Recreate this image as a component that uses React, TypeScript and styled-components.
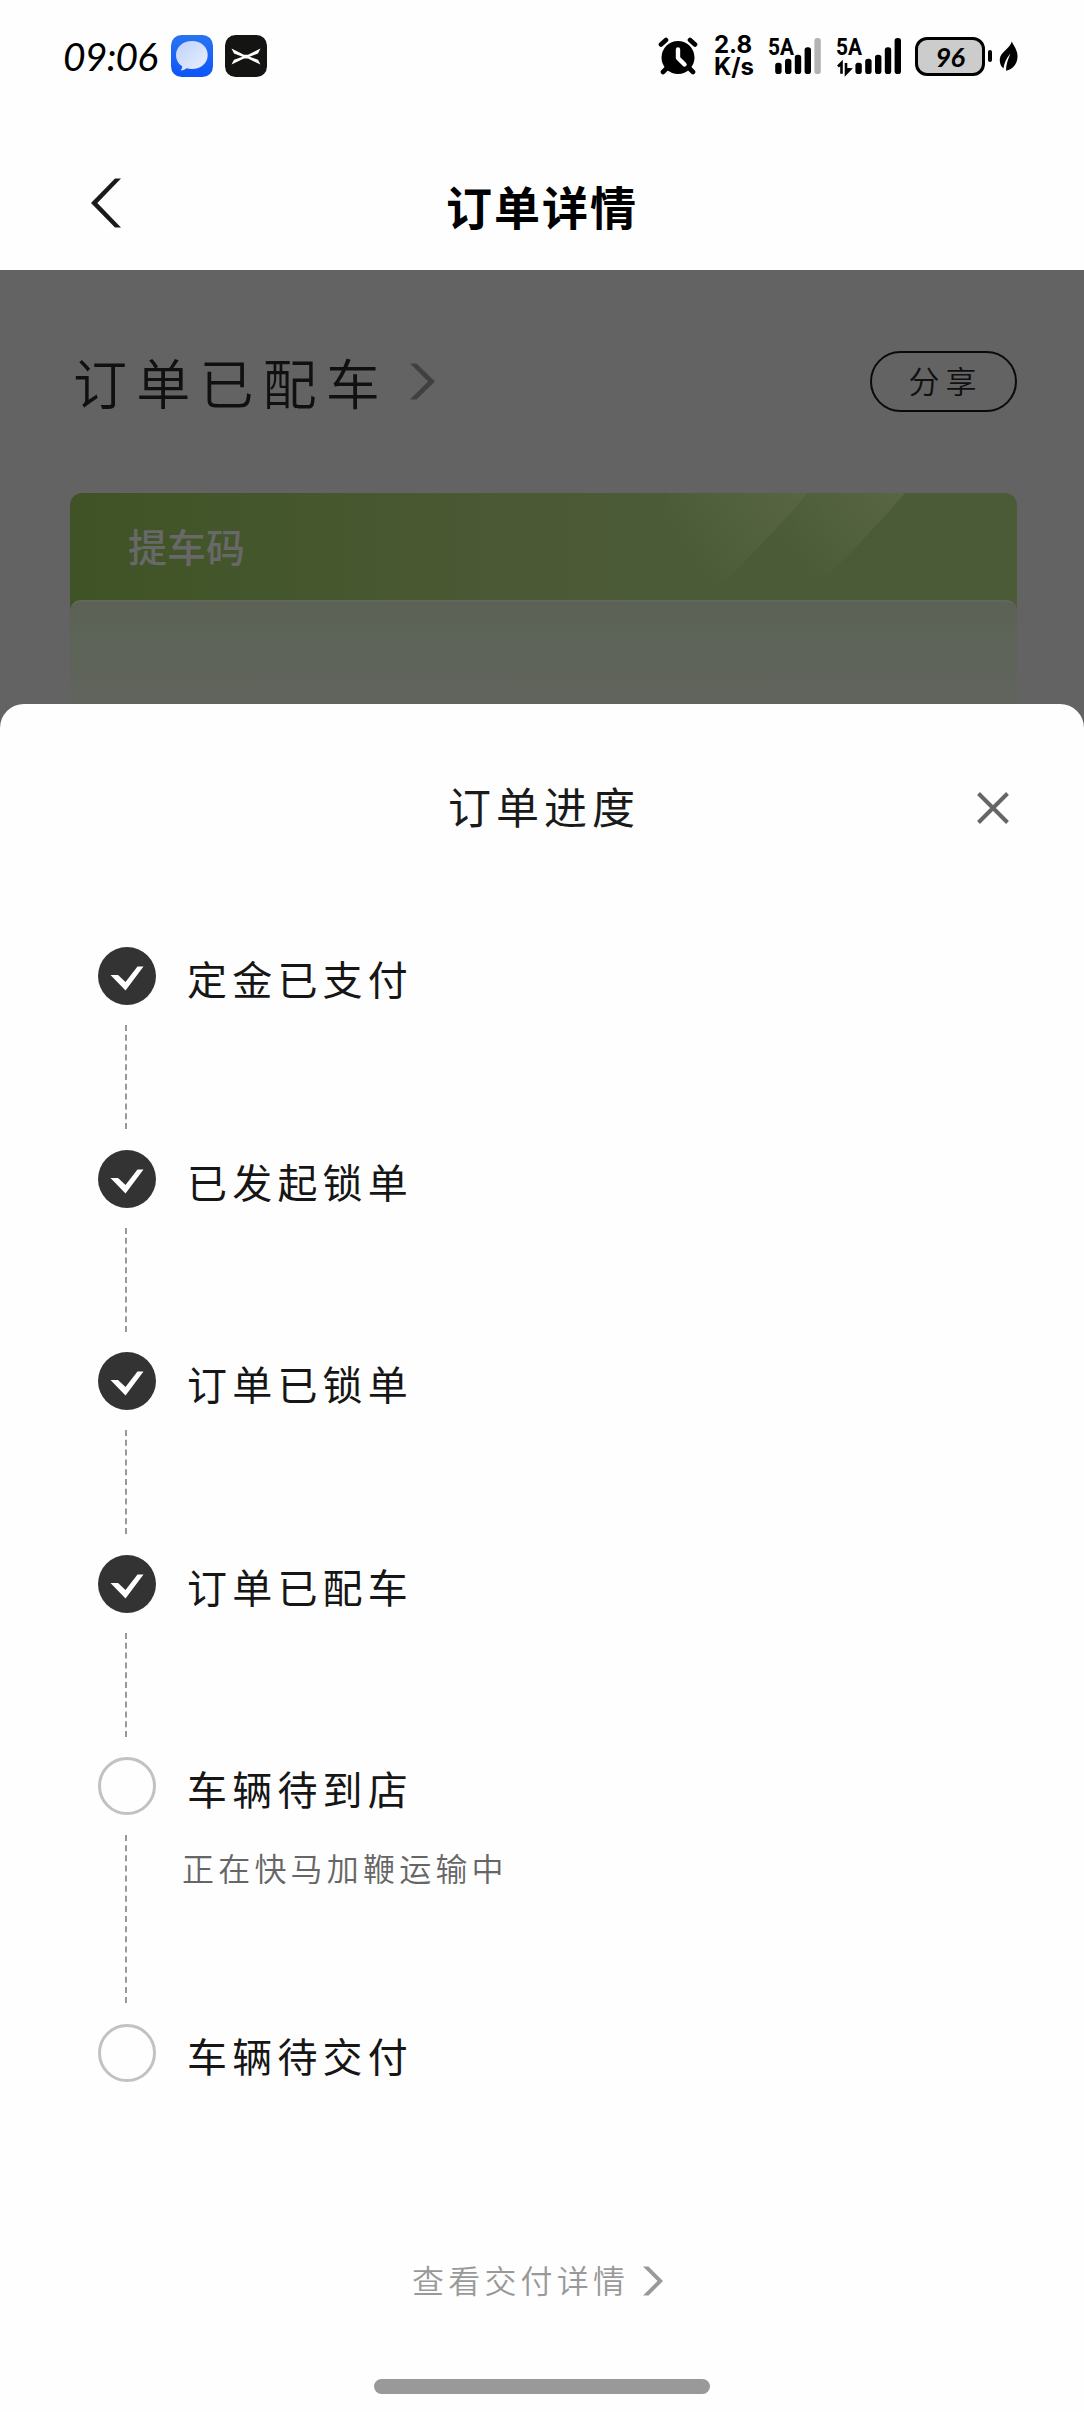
import React from "react";
import styled, { createGlobalStyle } from "styled-components";

const cjk = `"Noto Sans CJK SC", "Noto Sans", sans-serif`;
const digits = `Lato, "Open Sans", sans-serif`;

const GlobalStyle = createGlobalStyle`
  * { box-sizing: border-box; }
  body { margin: 0; background: #fefefe; font-family: ${cjk}; }
`;

const Screen = styled.div`
  width: 1084px;
  height: 2412px;
  display: flex;
  flex-direction: column;
  overflow: hidden;
  background: #fefefe;
`;

const StatusBar = styled.div`
  height: 112px;
  padding: 0 66px 0 63px;
  display: flex;
  align-items: center;
  justify-content: space-between;
`;

const StatusGroup = styled.div`
  display: flex;
  align-items: center;
  height: 44px;
`;

const Clock = styled.span`
  width: 108px;
  font: italic 400 39px/44px ${digits};
  letter-spacing: -0.8px;
  color: #000;
`;

const AppIcon = styled.svg`
  display: block;
  width: 42px;
  height: 42px;
  margin-right: 12px;
`;

const AlarmIcon = styled.svg`
  width: 40px;
  height: 40px;
  margin-right: 16px;
`;

const NetSpeed = styled.div`
  width: 54px;
  display: flex;
  flex-direction: column;
  font: 700 24px/22px Inter, sans-serif;
  color: #000;
`;

const Signal = styled.svg<{ $gap: number }>`
  height: 40px;
  margin-right: ${(p) => p.$gap}px;
  overflow: visible;
`;

const Battery = styled.div`
  width: 70px;
  height: 39px;
  border: 3px solid #000;
  border-radius: 12px;
  background: #ccc;
  display: flex;
  align-items: center;
  justify-content: center;
  font: italic 700 27px/33px ${digits};
  letter-spacing: -0.5px;
  color: #000;
`;

const BatteryNub = styled.div`
  width: 4px;
  height: 12px;
  margin: 0 7px 0 3px;
  border-radius: 2px;
  background: #000;
`;

const LeafIcon = styled.svg`
  width: 19px;
  height: 30px;
`;

const NavBar = styled.header`
  height: 158px;
  padding: 27px 91px 0;
  display: grid;
  grid-template-columns: 60px 1fr 60px;
  align-items: center;
`;

const BackIcon = styled.svg`
  width: 30px;
  height: 50px;
  margin-bottom: 3px;
`;

const NavTitle = styled.h1`
  margin: 0;
  text-align: center;
  font: 700 46px/60px ${cjk};
  letter-spacing: 2px;
  color: #000;
`;

const Dimmed = styled.section`
  height: 434px;
  padding: 81px 67px 0 70px;
  background: #636363;
`;

const OrderHeader = styled.div`
  display: flex;
  align-items: center;
  height: 61px;
  margin-bottom: 81px;
`;

const OrderStatus = styled.h2`
  margin: 0 21px 0 3px;
  font: 350 54px/61px ${cjk};
  letter-spacing: 9.2px;
  color: #101010;
`;

const StatusArrow = styled.svg`
  width: 25px;
  height: 37px;
`;

const ShareButton = styled.button`
  margin-left: auto;
  width: 147px;
  height: 61px;
  padding: 0 0 4px 4px;
  border: 2px solid #0a0a0a;
  border-radius: 31px;
  background: transparent;
  font: 350 31px/50px ${cjk};
  letter-spacing: 6px;
  color: #101010;
`;

const Card = styled.div`
  height: 230px;
  border-radius: 12px 12px 0 0;
  background: linear-gradient(90deg, #405326 0%, #44562b 20%, #4b5934 45%, #4c5b37 60%, #4c5b37 100%);
  overflow: hidden;
`;

const CardHead = styled.div`
  height: 107px;
  display: grid;
  grid-template-columns: 1fr;
  align-items: center;
`;

const CardTitle = styled.span`
  grid-area: 1 / 1;
  padding: 0 0 3px 58px;
  font: 500 39px/50px ${cjk};
  color: #686868;
`;

const CardShine = styled.svg`
  grid-area: 1 / 1;
  width: 100%;
  height: 107px;
`;

const CardBody = styled.div`
  height: 123px;
  border-radius: 11px 11px 0 0;
  border-top: 2px solid #61675c;
  background: linear-gradient(180deg, #5b6154 0%, #5d6458 30%, #60645c 70%, #62655f 100%);
`;

const SheetArea = styled.div`
  flex: 1;
  display: flex;
  background: #636363;
`;

const Sheet = styled.section`
  flex: 1;
  border-radius: 24px 24px 0 0;
  background: #fefefe;
  display: flex;
  flex-direction: column;
`;

const SheetHeader = styled.div`
  height: 208px;
  padding: 0 75px;
  display: grid;
  grid-template-columns: 36px 1fr 32px;
  align-items: center;
`;

const SheetTitle = styled.h2`
  margin: 0 0 6px;
  text-align: center;
  font: 400 43px/60px ${cjk};
  letter-spacing: 5px;
  color: #1a1a1a;
`;

const CloseIcon = styled.svg`
  width: 32px;
  height: 32px;
`;

const Steps = styled.ol`
  list-style: none;
  margin: 35px 0 0;
  padding: 0 98px;
`;

const Step = styled.li<{ $height: number }>`
  display: flex;
  height: ${(p) => p.$height}px;
`;

const Rail = styled.div`
  width: 58px;
  margin-right: 31px;
  display: flex;
  flex-direction: column;
`;

const Marker = styled.svg`
  width: 58px;
  height: 58px;
  flex: none;
`;

const Dashes = styled.div`
  flex: 1;
  margin: 20px 0 20.5px 27px;
  border-left: 2px dashed #999;
`;

const StepText = styled.div`
  display: flex;
  flex-direction: column;
  padding-top: 2px;
`;

const StepTitle = styled.span`
  font: 400 40px/58px ${cjk};
  letter-spacing: 5.2px;
  color: #161616;
`;

const StepNote = styled.span`
  margin: 27px 0 0 -5px;
  font: 350 32px/46px ${cjk};
  letter-spacing: 4.2px;
  color: #666;
`;

const DetailLink = styled.a`
  margin: 174px 0 0 412px;
  display: flex;
  align-items: center;
  height: 50px;
  font: 350 32px/50px ${cjk};
  letter-spacing: 4.2px;
  color: #999;
`;

const LinkLabel = styled.span`
  padding-bottom: 3px;
`;

const LinkArrow = styled.svg`
  width: 20px;
  height: 30px;
  margin-left: 14px;
`;

const HomeIndicator = styled.div`
  width: 336px;
  height: 15px;
  margin: 73px auto 0;
  border-radius: 8px;
  background: #999;
`;

const barTops = [24.7, 20.7, 16.7, 9.3, 0];

function SignalBars({ left, faded }: { left: number; faded?: boolean }) {
  return (
    <>
      {barTops.map((top, i) => (
        <rect
          key={i}
          x={left + i * 9.8}
          y={top}
          width="6.4"
          height={36 - top}
          rx="2.8"
          fill={faded && i === 4 ? "#b3b3b3" : "#000"}
        />
      ))}
    </>
  );
}

function NetworkLabel() {
  return (
    <text
      x="0"
      y="17"
      fontFamily="Roboto, sans-serif"
      fontWeight="700"
      fontSize="24"
      textLength="26"
      lengthAdjust="spacingAndGlyphs"
    >
      5A
    </text>
  );
}

type StepData = { title: string; done: boolean; height: number; note?: string };

const steps: StepData[] = [
  { title: "定金已支付", done: true, height: 202.6 },
  { title: "已发起锁单", done: true, height: 202.6 },
  { title: "订单已锁单", done: true, height: 202.6 },
  { title: "订单已配车", done: true, height: 202.6 },
  { title: "车辆待到店", done: false, height: 266.6, note: "正在快马加鞭运输中" },
  { title: "车辆待交付", done: false, height: 58 },
];

export default function App() {
  return (
    <Screen>
      <GlobalStyle />
      <StatusBar>
        <StatusGroup>
          <Clock>09:06</Clock>
          <AppIcon viewBox="0 0 42 42">
            <defs>
              <linearGradient id="blue" x1="0" y1="0" x2="0" y2="1">
                <stop offset="0" stopColor="#2a74f2" />
                <stop offset="1" stopColor="#0d55f8" />
              </linearGradient>
              <linearGradient id="bubble" x1="0" y1="0" x2="1" y2="1">
                <stop offset="0" stopColor="#bfd2fb" />
                <stop offset="1" stopColor="#e9effd" />
              </linearGradient>
            </defs>
            <rect width="42" height="42" rx="10.5" fill="url(#blue)" />
            <path
              d="M21 6C12 6 5 12 5 20c0 5 2.400 8.800 6.200 11.300 0 1.700-.6 3-1.500 4.200 2.600-.2 4.500-1 6-2.200 1.700.5 3.400.7 5.300.7 9 0 15.700-6 15.700-14S30 6 21 6z"
              fill="url(#bubble)"
            />
          </AppIcon>
          <AppIcon viewBox="0 0 42 42">
            <rect width="42" height="42" rx="10.5" fill="#141412" />
            <path
              d="M6.500 13.500L19 19.800h4L35.500 13.500 33 18.500l-8.500 3.200 8.500 3 2.500 4.800L23 23.600h-4L6.500 29.500 9 24.700l8.500-3-8.500-3.200z"
              fill="#fff"
            />
          </AppIcon>
        </StatusGroup>
        <StatusGroup>
          <AlarmIcon viewBox="0 0 40 40">
            <g stroke="#000" strokeWidth="4.600" strokeLinecap="round">
              <path d="M3 8.500l5-4.500M37 8.500L32 4M9 32l-4 4M31 32l4 4" />
            </g>
            <circle cx="20" cy="21.500" r="16.500" fill="#000" />
            <path
              d="M20 13.500v8.500l6.500 6.500"
              fill="none"
              stroke="#fefefe"
              strokeWidth="4.400"
              strokeLinecap="round"
              strokeLinejoin="round"
            />
          </AlarmIcon>
          <NetSpeed>
            <span>2.8</span>
            <span>K/s</span>
          </NetSpeed>
          <Signal $gap={15} width="53" viewBox="0 -2 53 40">
            <NetworkLabel />
            <SignalBars left={7.2} faded />
          </Signal>
          <Signal $gap={14} width="65" viewBox="0 -2 65 40">
            <NetworkLabel />
            <path
              d="M2 28.500l3.500-3.500v10.800M10 25v10.500l4-4.200-4-.2"
              fill="none"
              stroke="#000"
              strokeWidth="2.600"
            />
            <SignalBars left={19.4} />
          </Signal>
          <Battery>96</Battery>
          <BatteryNub />
          <LeafIcon viewBox="0 0 19 30">
            <path
              d="M12.800.5C14 4 18.500 8 18.500 15.500c0 7-4.500 13-11.500 14.200 0-6 2-11.500 4.500-17.200C7 17.500 5 22.500 4.500 27.500 1.500 25 .5 21.500.8 18 1.500 10.500 11 8 12.800.5z"
              fill="#000"
            />
          </LeafIcon>
        </StatusGroup>
      </StatusBar>

      <NavBar>
        <BackIcon viewBox="0 0 30 50">
          <path d="M24 0.500h6L6.300 25 30 49.500h-6L0 25z" fill="#1a1a1a" />
        </BackIcon>
        <NavTitle>订单详情</NavTitle>
      </NavBar>

      <Dimmed>
        <OrderHeader>
          <OrderStatus>订单已配车</OrderStatus>
          <StatusArrow viewBox="0 0 25 37">
            <path d="M0 .5h6.500L25 18.500 6.500 36.500H0l18-18z" fill="#404040" />
          </StatusArrow>
          <ShareButton>分享</ShareButton>
        </OrderHeader>
        <Card>
          <CardHead>
            <CardShine viewBox="0 0 947 107" preserveAspectRatio="none">
              <defs>
                <linearGradient id="shineLeft" gradientUnits="userSpaceOnUse" x1="725" y1="0" x2="620" y2="70">
                  <stop offset="0" stopColor="#fff" stopOpacity="0.06" />
                  <stop offset="1" stopColor="#fff" stopOpacity="0" />
                </linearGradient>
                <linearGradient id="shineRight" gradientUnits="userSpaceOnUse" x1="830" y1="0" x2="735" y2="80">
                  <stop offset="0" stopColor="#fff" stopOpacity="0.065" />
                  <stop offset="1" stopColor="#fff" stopOpacity="0" />
                </linearGradient>
              </defs>
              <path d="M600 0H738Q690 55 636 107H525z" fill="url(#shineLeft)" />
              <path d="M738 0H835Q790 52 733 107H636Q690 55 738 0z" fill="url(#shineRight)" />
            </CardShine>
            <CardTitle>提车码</CardTitle>
          </CardHead>
          <CardBody />
        </Card>
      </Dimmed>

      <SheetArea>
        <Sheet>
          <SheetHeader>
            <span />
            <SheetTitle>订单进度</SheetTitle>
            <CloseIcon viewBox="0 0 32 32">
              <path d="M1.500 1.500l29 29M30.500 1.500l-29 29" stroke="#666" strokeWidth="4" />
            </CloseIcon>
          </SheetHeader>
          <Steps>
            {steps.map((step, i) => (
              <Step key={step.title} $height={step.height}>
                <Rail>
                  <Marker viewBox="0 0 58 58">
                    {step.done ? (
                      <>
                        <circle cx="29" cy="29" r="29" fill="#333" />
                        <path d="M12.500 28h7.500l7.500 7L39.500 19.500h6L27.500 43.500z" fill="#fff" />
                      </>
                    ) : (
                      <circle cx="29" cy="29" r="27.500" fill="none" stroke="#c2c2c2" strokeWidth="3" />
                    )}
                  </Marker>
                  {i < steps.length - 1 && <Dashes />}
                </Rail>
                <StepText>
                  <StepTitle>{step.title}</StepTitle>
                  {step.note && <StepNote>{step.note}</StepNote>}
                </StepText>
              </Step>
            ))}
          </Steps>
          <DetailLink>
            <LinkLabel>查看交付详情</LinkLabel>
            <LinkArrow viewBox="0 0 20 30">
              <path d="M0 .5h5.500L20 15 5.500 29.500H0L14.500 15z" fill="#999" />
            </LinkArrow>
          </DetailLink>
          <HomeIndicator />
        </Sheet>
      </SheetArea>
    </Screen>
  );
}
